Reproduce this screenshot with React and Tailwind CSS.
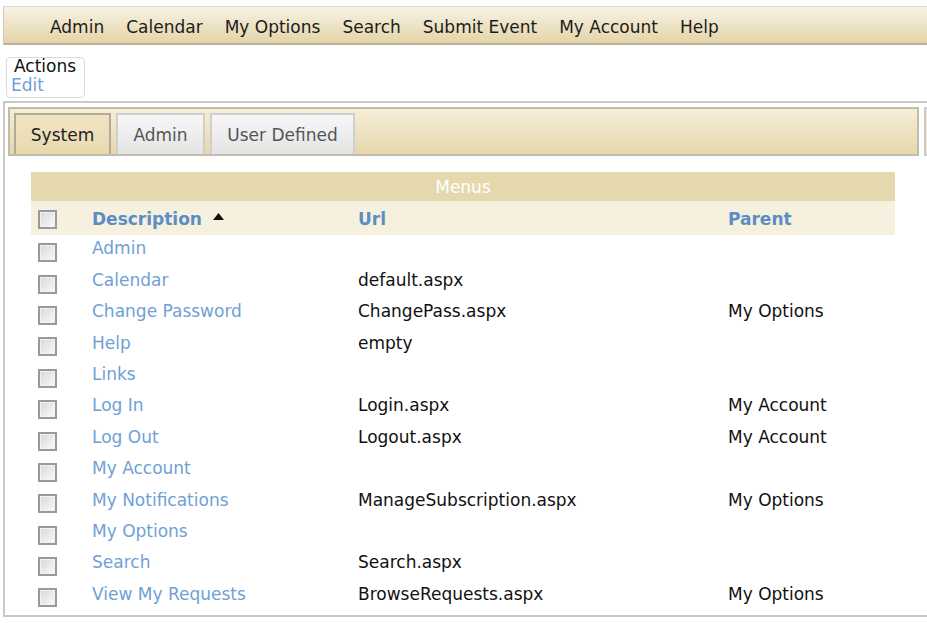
import React from "react";

const MENU_ITEMS = ["Admin", "Calendar", "My Options", "Search", "Submit Event", "My Account", "Help"];

const TABS = [
  { label: "System", width: "w-[97px]", active: true },
  { label: "Admin", width: "w-[89px]", active: false },
  { label: "User Defined", width: "w-[145px]", active: false },
];

const ROWS = [
  { description: "Admin", url: "", parent: "" },
  { description: "Calendar", url: "default.aspx", parent: "" },
  { description: "Change Password", url: "ChangePass.aspx", parent: "My Options" },
  { description: "Help", url: "empty", parent: "" },
  { description: "Links", url: "", parent: "" },
  { description: "Log In", url: "Login.aspx", parent: "My Account" },
  { description: "Log Out", url: "Logout.aspx", parent: "My Account" },
  { description: "My Account", url: "", parent: "" },
  { description: "My Notifications", url: "ManageSubscription.aspx", parent: "My Options" },
  { description: "My Options", url: "", parent: "" },
  { description: "Search", url: "Search.aspx", parent: "" },
  { description: "View My Requests", url: "BrowseRequests.aspx", parent: "My Options" },
];

const Checkbox = () => (
  <span className="inline-block w-[19px] h-[19px] border-2 border-[#9a9a9a] bg-gradient-to-br from-[#d8d8d8] to-[#fafafa] shadow-[inset_0_0_0_1px_#f2f2f2]" />
);

const App = () => {
  return (
    <div className="w-[927px] h-[623px] overflow-hidden bg-white text-[17px] text-[#111]" style={{ fontFamily: "'DejaVu Sans', Verdana, sans-serif" }}>
      {/* top menu bar */}
      <div className="ml-[3px] mt-[6px] h-[39px] w-[940px] flex items-center pt-[4px] pl-[35px] border-t border-[#dedad0] border-b-2 border-b-[#b9b29e] border-l border-l-[#d0cbbd] bg-gradient-to-b from-[#f7f2e5] to-[#e4d4a8]">
        {MENU_ITEMS.map((item) => (
          <span key={item} className="px-[11px] text-[#1c1c1c] leading-none">
            {item}
          </span>
        ))}
      </div>

      {/* actions box */}
      <div className="ml-[6px] mt-[12px] w-[79px] h-[41px] border border-[#d3dde8] rounded-[4px] px-[6px] leading-[19px]">
        <div className="-mt-[1px]">
          <div className="text-[#111] pl-[1px]">Actions</div>
          <div className="text-[#6f9fd6] -ml-[2px]">Edit</div>
        </div>
      </div>

      {/* main panel */}
      <div className="ml-[3px] mt-[3px] w-[960px] h-[516px] border-2 border-[#c9c9c9] pt-[4px]">
        <div className="flex items-start">
          <div className="ml-[3px] w-[911px] h-[49px] border-2 border-[#c2bcab] bg-gradient-to-b from-[#f5eed8] to-[#e6d7ac] flex items-end pl-[4px] gap-[5px]">
            {TABS.map((tab) => (
              <div
                key={tab.label}
                className={`${tab.width} h-[41px] pt-[2px] flex items-center justify-center border-2 border-b-0 ${
                  tab.active
                    ? "border-[#b2ab98] bg-gradient-to-b from-[#f1e5c3] to-[#e8d9ae] text-[#222]"
                    : "border-[#cfcfcf] bg-gradient-to-b from-[#f7f7f7] to-[#e4e4e4] text-[#555]"
                }`}
              >
                {tab.label}
              </div>
            ))}
          </div>
          <div className="ml-[5px] w-[20px] h-[49px] border-2 border-[#c9c9c9] bg-[#f0e8d2]" />
        </div>

        <div className="ml-[26px] mt-[16px] w-[864px]">
          <div className="h-[29px] pt-[3px] bg-[#e6d8ae] flex items-center justify-center text-white">Menus</div>
          <div className="h-[34px] pt-[3px] bg-[#f6f1de] flex items-center font-bold text-[#5c8dc6]">
            <div className="w-[61px] pl-[7px] flex items-center">
              <Checkbox />
            </div>
            <div className="w-[266px] flex items-center">
              Description
              <svg className="ml-[11px] mb-[6px]" width="11" height="7" viewBox="0 0 11 7">
                <path d="M5.5 0 L11 7 L0 7 Z" fill="#111" />
              </svg>
            </div>
            <div className="w-[370px]">Url</div>
            <div>Parent</div>
          </div>
          <div className="-mt-[1.5px]">
            {ROWS.map((row) => (
              <div key={row.description} className="h-[31.4px] flex items-center">
                <div className="w-[61px] pl-[7px] pt-[7px] flex items-center">
                  <Checkbox />
                </div>
                <div className="w-[266px] text-[#6f9fd6]">{row.description}</div>
                <div className="w-[370px]">{row.url}</div>
                <div>{row.parent}</div>
              </div>
            ))}
          </div>
        </div>
      </div>
    </div>
  );
};

export default App;
